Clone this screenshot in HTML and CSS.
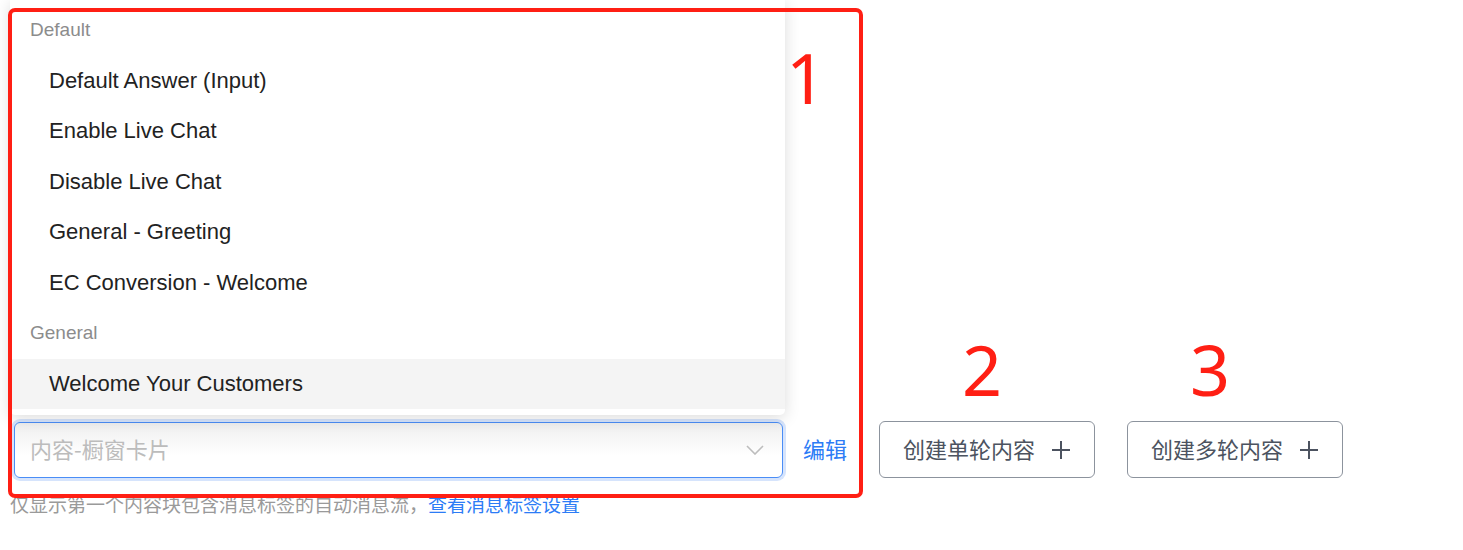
FILE: index.html
```html
<!DOCTYPE html>
<html lang="zh-CN">
<head>
  <meta charset="UTF-8">
  <title>消息流选择</title>
  <link rel="stylesheet" href="styles.css">
</head>
<body>
  <div class="page">
    <div class="form-row">
      <div class="select-box">
        <span class="placeholder">内容-橱窗卡片</span>
        <svg class="chevron" width="18" height="10" viewBox="0 0 18 10">
          <path d="M1 1 L9 9 L17 1" fill="none" stroke="#bdbdbd" stroke-width="1.6"/>
        </svg>
      </div>
      <a class="edit-link">编辑</a>
      <button class="create-btn">创建单轮内容
        <svg width="20" height="20" viewBox="0 0 20 20"><path d="M10 1 V19 M1 10 H19" stroke="#4c5360" stroke-width="2"/></svg>
      </button>
      <button class="create-btn second">创建多轮内容
        <svg width="20" height="20" viewBox="0 0 20 20"><path d="M10 1 V19 M1 10 H19" stroke="#4c5360" stroke-width="2"/></svg>
      </button>
    </div>
    <p class="hint">仅显示第一个内容块包含消息标签的自动消息流，<a>查看消息标签设置</a></p>

    <div class="dropdown">
      <div class="group-label">Default</div>
      <div class="option">Default Answer (Input)</div>
      <div class="option">Enable Live Chat</div>
      <div class="option">Disable Live Chat</div>
      <div class="option">General - Greeting</div>
      <div class="option">EC Conversion - Welcome</div>
      <div class="group-label">General</div>
      <div class="option hover">Welcome Your Customers</div>
    </div>

    <div class="mark-box"></div>
    <span class="mark-num n1">1</span>
    <span class="mark-num n2">2</span>
    <span class="mark-num n3">3</span>
  </div>
</body>
</html>
```

FILE: styles.css
```css
body {
  margin: 0;
  background: #fff;
  font-family: "Liberation Sans", Arial, "Noto Sans CJK SC", sans-serif;
}

.page {
  position: relative;
  width: 1463px;
  height: 550px;
  overflow: hidden;
}

.form-row {
  display: flex;
  align-items: center;
  padding: 421px 0 0 14px;
}

.select-box {
  width: 769px;
  height: 56px;
  box-sizing: border-box;
  border: 1px solid #4a8df6;
  border-radius: 6px;
  box-shadow: 0 0 0 3px #d6e4fc;
  background: linear-gradient(#efefef, #fff 60%);
  display: flex;
  align-items: center;
  justify-content: space-between;
  padding: 0 18px 0 15px;
}

.placeholder {
  font-family: "Noto Sans CJK SC", sans-serif;
  font-size: 22px;
  line-height: 1;
  padding-bottom: 4px;
  color: #bcbcbc;
}

.edit-link {
  margin-left: 20px;
  font-family: "Noto Sans CJK SC", sans-serif;
  font-size: 22px;
  line-height: 1;
  padding-bottom: 4px;
  color: #2c7cf6;
}

.create-btn {
  margin-left: 32px;
  height: 57px;
  padding: 0 23px 3px 23px;
  display: flex;
  align-items: center;
  gap: 16px;
  background: #fff;
  border: 1px solid #8c939d;
  border-radius: 6px;
  font-family: "Noto Sans CJK SC", sans-serif;
  font-size: 22px;
  color: #4c5360;
}

.create-btn svg {
  margin-top: 3px;
}

.hint {
  margin: 12px 0 0 10px;
  font-family: "Noto Sans CJK SC", sans-serif;
  font-size: 19px;
  color: #9a9a9a;
}

.hint a {
  color: #2c7cf6;
}

.dropdown {
  position: absolute;
  left: 10px;
  top: 0;
  width: 775px;
  box-sizing: border-box;
  padding: 5px 0 6px;
  background: #fff;
  border-radius: 0 0 5px 5px;
  box-shadow: 0 3px 16px rgba(0, 0, 0, 0.14);
}

.group-label,
.option {
  height: 50.5px;
  display: flex;
  align-items: center;
}

.group-label {
  padding-left: 20px;
  font-size: 19px;
  color: #8c8c8c;
}

.option {
  padding-left: 39px;
  font-size: 22px;
  color: #222;
}

.option.hover {
  background: #f4f4f4;
}

.mark-box {
  position: absolute;
  left: 8px;
  top: 8px;
  width: 855px;
  height: 490px;
  box-sizing: border-box;
  border: 4px solid #ff1f14;
  border-radius: 7px;
}

.mark-num {
  position: absolute;
  font-family: "Noto Sans", sans-serif;
  font-size: 70px;
  line-height: 1;
  color: #ff1f14;
}

.n1 { left: 786px; top: 42px; }
.n2 { left: 962px; top: 334px; }
.n3 { left: 1190px; top: 334px; }
```
